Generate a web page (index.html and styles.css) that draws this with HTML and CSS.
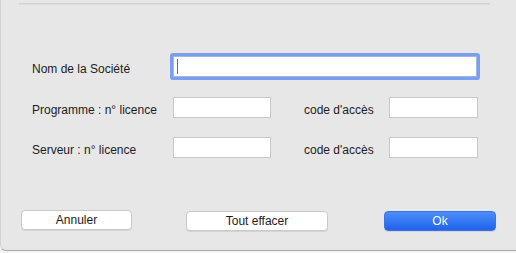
FILE: index.html
```html
<!DOCTYPE html>
<html lang="fr">
<head>
<meta charset="utf-8">
<title>Licence</title>
<link rel="stylesheet" href="styles.css">
</head>
<body>
<div class="window">
  <div class="sep"></div>
  <div class="row row-first">
    <span class="label">Nom de la Société</span>
    <div class="field field-wide focused"><span class="caret"></span></div>
  </div>
  <div class="row row-second">
    <span class="label">Programme : n° licence</span>
    <div class="field"></div>
    <span class="label label-right">code d'accès</span>
    <div class="field"></div>
  </div>
  <div class="row row-third">
    <span class="label">Serveur : n° licence</span>
    <div class="field"></div>
    <span class="label label-right">code d'accès</span>
    <div class="field"></div>
  </div>
  <div class="buttons">
    <button class="btn btn-cancel">Annuler</button>
    <button class="btn btn-clear">Tout effacer</button>
    <button class="btn btn-ok">Ok</button>
  </div>
</div>
</body>
</html>
```
FILE: styles.css
```css
html, body {
  margin: 0;
  padding: 0;
}
body {
  width: 516px;
  height: 253px;
  background: #f4f4f4;
  font-family: "Liberation Sans", Arial, sans-serif;
  font-size: 12px;
  color: #1c1c1c;
  overflow: hidden;
}
.window {
  height: 250px;
  background: #e7e7e7;
  border-bottom: 1px solid #a9a9a9;
  border-left: 1px solid #d4d4d4;
  border-bottom-left-radius: 6px;
  display: flex;
  flex-direction: column;
  box-sizing: content-box;
}
.sep {
  margin: 3px 26px 0 18px;
  height: 1px;
  background: #d2d2d2;
  border-bottom: 1px solid #dcdcdc;
}
.row {
  display: grid;
  grid-template-columns: 141px 98px 33px 85px 89px;
  align-items: center;
  padding-left: 31px;
}
.row-first { margin-top: 51px; }
.row-second { margin-top: 20px; }
.row-third { margin-top: 19px; }
.label {
  margin-top: 4px;
  white-space: nowrap;
  line-height: 14px;
}
.label-right {
  grid-column: 4;
}
.field {
  height: 21px;
  box-sizing: border-box;
  background: #ffffff;
  border: 1px solid #c8c8c8;
}
.field-wide {
  grid-column: 2 / 6;
  margin-right: 1px;
  display: flex;
  align-items: center;
  padding-left: 3px;
}
.focused {
  border-color: #9fb6e6;
  border-radius: 1px;
  box-shadow: 0 0 0 3px #7b9ff0;
}
.caret {
  width: 1px;
  height: 15px;
  background: #6a6a6a;
}
.buttons {
  display: flex;
  align-items: flex-start;
  padding-left: 20px;
  margin-top: 52px;
}
.btn {
  font-family: "Liberation Sans", Arial, sans-serif;
  font-size: 12px;
  height: 20px;
  padding: 0;
  box-sizing: border-box;
  border-radius: 4px;
  color: #1c1c1c;
  background: #ffffff;
  border: 1px solid #c9c9c9;
  box-shadow: 0 1px 0 rgba(0,0,0,0.08);
  line-height: 18px;
}
.btn-cancel { width: 111px; }
.btn-clear { width: 142px; margin-left: 54px; margin-top: 1px; }
.btn-ok {
  width: 112px;
  margin-left: 56px;
  margin-top: 1px;
  color: #ffffff;
  border: 1px solid #3a72ea;
  background: linear-gradient(#4b8ef7, #2262ec);
}
```
